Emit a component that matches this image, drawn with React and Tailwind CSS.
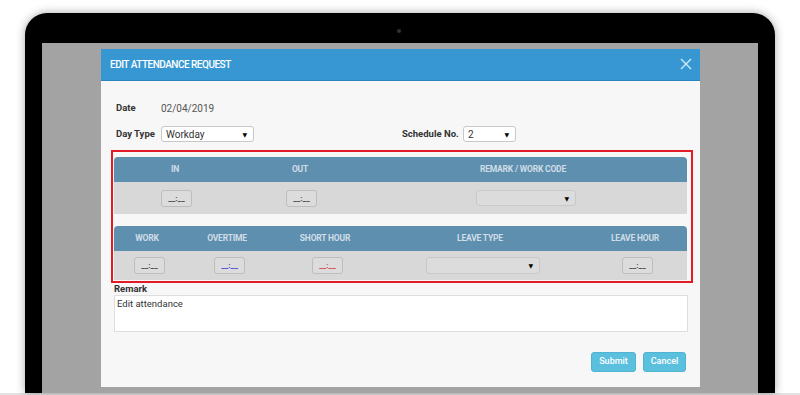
const font = "font-['Roboto','DejaVu_Sans',sans-serif]";

function TimeBox({ color = "text-[#444]", className = "" }) {
  return (
    <div
      className={`h-[17px] w-[31px] rounded-[3px] border border-[#bdbdbd] bg-[#dcdcdc] flex items-end justify-center pb-[3px] text-[8px] font-bold leading-none ${color} ${className}`}
    >
      __:__
    </div>
  );
}

function SelectBox({ width, value = "", bg = "bg-white", h = "h-[16px]" }) {
  return (
    <div
      className={`${h} ${bg} rounded-[3px] border border-[#c8c8c8] flex items-center justify-between pl-[4px] pr-[6px] text-[10px] text-[#333]`}
      style={{ width }}
    >
      <span>{value}</span>
      <span className="text-[6px] text-black">▼</span>
    </div>
  );
}

export default function App() {
  return (
    <div className={`w-[800px] h-[395px] bg-white overflow-hidden ${font}`}>
      <div className="pt-[13px] px-[25px]">
        {/* laptop bezel */}
        <div className="relative h-[380px] bg-black rounded-t-[22px] px-[17px] pt-[30px] shadow-[0_0_10px_rgba(0,0,0,0.35)]">
          <div className="absolute left-[372px] top-[16px] h-[4px] w-[4px] rounded-full bg-[#333]" />
          {/* screen */}
          <div className="h-[350px] bg-[#a3a3a3] pt-[6px] pl-[59px]">
            {/* modal */}
            <div className="w-[599px] h-[338px] bg-[#f7f7f7] flex flex-col">
              <div className="h-[32px] bg-[#3797d3] border-b border-[#2c84bd] flex items-center justify-between pl-[9px] pr-[8px]">
                <span className="text-white text-[10px] font-medium tracking-[-0.5px]">
                  EDIT ATTENDANCE REQUEST
                </span>
                <svg width="12" height="12" viewBox="0 0 12 12" className="mb-[2px]">
                  <path d="M1 1L11 11M11 1L1 11" stroke="#d8ecf8" strokeWidth="1.3" />
                </svg>
              </div>

              <div className="px-[13px]">
                <div className="flex items-center h-[14px] mt-[20px] pl-[2px] text-[9.5px]">
                  <span className="w-[45px] font-bold text-[#333]">Date</span>
                  <span className="text-[#555] text-[10px]">02/04/2019</span>
                </div>

                <div className="flex items-center mt-[11px] pl-[2px] text-[9.5px]">
                  <span className="w-[45px] font-bold text-[#333]">Day Type</span>
                  <SelectBox width="93px" value="Workday" />
                  <span className="ml-[148px] w-[61px] font-bold text-[#333]">Schedule No.</span>
                  <SelectBox width="53px" value="2" />
                </div>

                {/* highlighted area */}
                <div className="mt-[8px] -ml-[3px] w-[582px] border-2 border-[#e21c24] pl-[1px] pr-[4px] pt-[5px] pb-[1px]">
                  <div className="rounded-t-[4px] overflow-hidden">
                    <div className="h-[25px] bg-[#5e8fae] flex items-center text-[8.5px] font-bold tracking-[-0.2px] text-[#cfdde7]">
                      <span className="w-[122px] text-center">IN</span>
                      <span className="w-[128px] text-center">OUT</span>
                      <span className="w-[318px] text-center">REMARK / WORK CODE</span>
                    </div>
                    <div className="h-[32px] bg-[#d8d8d8] flex items-center">
                      <TimeBox className="ml-[47px]" />
                      <TimeBox className="ml-[94px]" />
                      <div className="ml-[159px]">
                        <SelectBox width="100px" bg="bg-[#dcdcdc]" h="h-[16px]" />
                      </div>
                    </div>
                  </div>

                  <div className="h-[12px]" />

                  <div className="rounded-t-[4px] overflow-hidden">
                    <div className="h-[25px] bg-[#5e8fae] flex items-center text-[8.5px] font-bold tracking-[-0.2px] text-[#cfdde7]">
                      <span className="w-[66px] text-center">WORK</span>
                      <span className="w-[94px] text-center">OVERTIME</span>
                      <span className="w-[102px] text-center">SHORT HOUR</span>
                      <span className="w-[208px] text-center">LEAVE TYPE</span>
                      <span className="w-[102px] text-center">LEAVE HOUR</span>
                    </div>
                    <div className="h-[29px] bg-[#d8d8d8] flex items-center">
                      <TimeBox className="ml-[20px]" />
                      <TimeBox className="ml-[49px]" color="text-[#3b3bd6]" />
                      <TimeBox className="ml-[67px]" color="text-[#d63b3b]" />
                      <div className="ml-[83px]">
                        <SelectBox width="114px" bg="bg-[#dcdcdc]" h="h-[17px]" />
                      </div>
                      <TimeBox className="ml-[82px]" />
                    </div>
                  </div>
                </div>

                <div className="text-[9.5px] leading-[12px] font-bold text-[#333]">Remark</div>
                <div className="w-[574px] h-[37px] bg-white border border-[#dedede] px-[2px] py-[1px] text-[9.5px] text-[#333]">
                  Edit attendance
                </div>

                <div className="flex justify-end gap-[7px] mt-[20px] pr-[1px]">
                  <button className="h-[20px] w-[45px] rounded-[3px] bg-[#5bc0de] border border-[#4fb3d2] text-white text-[9px] font-medium">
                    Submit
                  </button>
                  <button className="h-[20px] w-[43px] rounded-[3px] bg-[#5bc0de] border border-[#4fb3d2] text-white text-[9px] font-medium">
                    Cancel
                  </button>
                </div>
              </div>
            </div>
          </div>
        </div>
      </div>
      <div className="h-[2px] bg-[#e2e2e2]" />
    </div>
  );
}
